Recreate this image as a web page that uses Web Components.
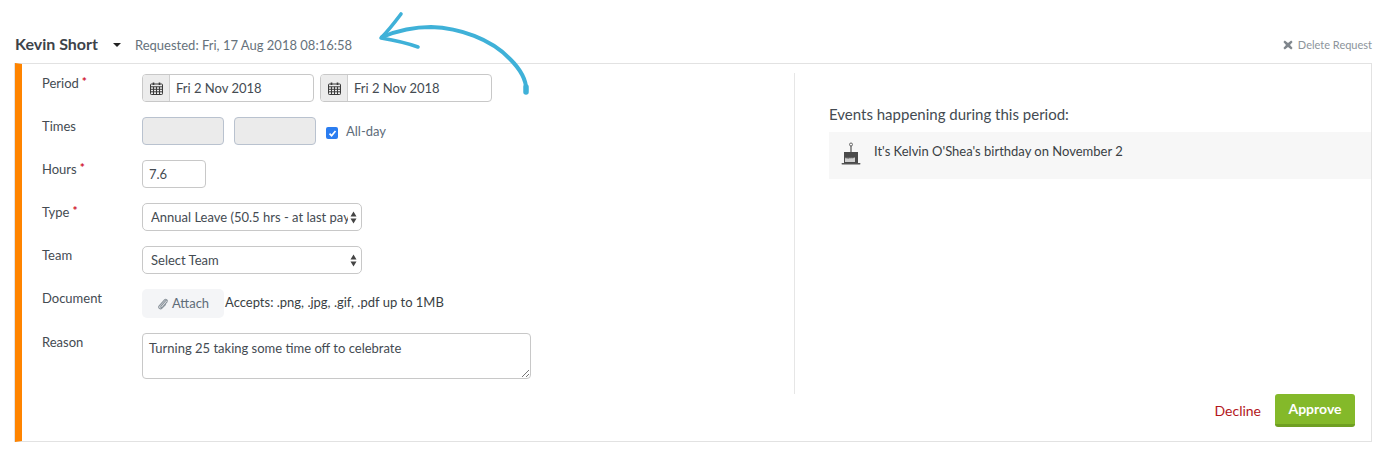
<!DOCTYPE html>
<html><head><meta charset="utf-8"><title>Request</title>
<style>
html,body{margin:0;padding:0;background:#fff}
body{font-family:Lato,"Open Sans",sans-serif;font-size:14px;color:#444b52;width:1383px;height:452px;overflow:hidden}
</style></head><body>
<x-request-page>
  <x-request-header slot="header" name="Kevin Short" requested="Requested: Fri, 17 Aug 2018 08:16:58"></x-request-header>
  <x-form-row slot="left" label="Period" required>
    <x-date-input value="Fri 2 Nov 2018" style="width:172px"></x-date-input>
    <x-date-input value="Fri 2 Nov 2018" style="width:172px"></x-date-input>
  </x-form-row>
  <x-form-row slot="left" label="Times">
    <x-text-box disabled style="width:82px"></x-text-box>
    <x-text-box disabled style="width:82px;margin-left:4px"></x-text-box>
    <x-check-label style="margin-left:4px">All-day</x-check-label>
  </x-form-row>
  <x-form-row slot="left" label="Hours" required><x-text-box value="7.6" style="width:64px"></x-text-box></x-form-row>
  <x-form-row slot="left" label="Type" required><x-select-box value="Annual Leave (50.5 hrs - at last pay"></x-select-box></x-form-row>
  <x-form-row slot="left" label="Team"><x-select-box value="Select Team"></x-select-box></x-form-row>
  <x-form-row slot="left" label="Document"><x-attach-field note="Accepts: .png, .jpg, .gif, .pdf up to 1MB"></x-attach-field></x-form-row>
  <x-form-row slot="left" label="Reason"><x-text-area value="Turning 25 taking some time off to celebrate"></x-text-area></x-form-row>
  <x-events-panel slot="right" heading="Events happening during this period:">
    <x-event-item>It's Kelvin O'Shea's birthday on November 2</x-event-item>
  </x-events-panel>
  <x-action-bar slot="actions"></x-action-bar>
</x-request-page>
<script>
function def(name, html){
  customElements.define(name, class extends HTMLElement{
    connectedCallback(){
      if(this.shadowRoot) return;
      const r=this.attachShadow({mode:'open'});
      r.innerHTML=typeof html==='function'?html(this):html;
    }
  });
}
const esc=s=>(s||'').replace(/&/g,'&amp;').replace(/</g,'&lt;');

def('x-request-page',`<style>
:host{display:block;position:relative;width:1383px;height:452px}
.head{height:63px;box-sizing:border-box;padding:0 11px 0 15px}
.card{box-sizing:border-box;margin-left:15px;width:1357px;height:379px;border:1px solid #e2e2e2;border-left:7px solid #ff8400;box-shadow:-1px 0 0 #e2e2e2;display:flex;flex-direction:column;position:relative}
.cols{display:flex;padding-top:9px;height:321px}
.left{width:773px;box-sizing:border-box;padding:1px 0 0 20px;border-right:1px solid #e6e6e6;display:flex;flex-direction:column;gap:15px}
.right{flex:1;padding:30px 0 0 34px;min-width:0}
.arrow{position:absolute;left:370px;top:6px;width:170px;height:100px;pointer-events:none}
</style>
<div class="head"><slot name="header"></slot></div>
<div class="card">
  <div class="cols"><div class="left"><slot name="left"></slot></div><div class="right"><slot name="right"></slot></div></div>
  <slot name="actions"></slot>
</div>
<svg class="arrow" viewBox="370 6 170 100" fill="none" stroke="#3fb1d8" stroke-linecap="round" stroke-linejoin="round">
  <path d="M526 92C527 82 521 70 510 59 491 39 460 28 431 27 414 27 399 30 382 37" stroke-width="4"/>
  <path d="M526 92V87" stroke-width="5.500"/>
  <path d="M401 14C395 22 388 31 381 38 393 40 407 43 418 47" stroke-width="3.600"/>
</svg>`);

def('x-request-header',h=>`<style>
:host{display:flex;align-items:center;height:63px;padding-top:25px;box-sizing:border-box}
.n{font:700 16px/20px Lato,sans-serif;color:#3d434a;width:97px}
.c{width:0;height:0;border:4px solid transparent;border-top:4px solid #222;border-bottom:0;margin:1px 0 0 1px}
.r{font:13px/20px Lato,sans-serif;color:#66727c;margin:1px 0 0 14px}
.d{margin-left:auto;font:11px/20px Lato,sans-serif;color:#8c949b;display:flex;align-items:center;gap:5px;margin-top:1px}
svg{width:10px;height:10px}
</style>
<span class="n">${esc(h.getAttribute('name'))}</span><span class="c"></span>
<span class="r">${esc(h.getAttribute('requested'))}</span>
<span class="d"><svg viewBox="0 0 10 10"><path d="M1.800.6 5 3 8.200.6 9.600 2 7 5 9.600 8 8.200 9.400 5 7 1.800 9.400.4 8 3 5 .4 2z" fill="#7f868c"/></svg>Delete Request</span>`);

def('x-form-row',h=>`<style>
:host{display:flex;align-items:flex-start;min-height:28px}
.l{width:100px;flex:none;font:13px/20px Lato,sans-serif;color:#444b52;display:flex;gap:3px;margin-top:-1px}
.s{color:#d0112b;font-size:12px;font-weight:700;line-height:17px}
.c{display:flex;align-items:flex-start;gap:6px}
</style>
<div class="l">${esc(h.getAttribute('label'))}${h.hasAttribute('required')?'<span class="s">*</span>':''}</div>
<div class="c"><slot></slot></div>`);

const calIcon=`<svg width="13" height="13" viewBox="0 0 13 13" fill="none" stroke="#3b3b3b" stroke-width="1"><rect x=".5" y="2" width="12" height="10.500" rx=".8"/><path d="M.5 4.800h12M.5 7.300h12M.5 9.800h12M3.500 4.800v7.700M6.500 4.800v7.700M9.500 4.800v7.700"/><path d="M3.500 .5v2.500M9.500 .5v2.500" stroke-width="1.600"/></svg>`;

def('x-date-input',h=>`<style>
:host{display:flex;height:28px;box-sizing:border-box;border:1px solid #c8c8c8;border-radius:4px;overflow:hidden;background:#fff}
.i{width:26px;flex:none;background:#ececec;border-right:1px solid #cfcfcf;display:flex;align-items:center;justify-content:center}
.v{padding-left:6px;font:13px/26px Lato,sans-serif;color:#444b52;white-space:nowrap}
</style><div class="i">${calIcon}</div><div class="v">${esc(h.getAttribute('value'))}</div>`);

def('x-text-box',h=>`<style>
:host{display:block;height:28px;box-sizing:border-box;border:1px solid ${h.hasAttribute('disabled')?'#b9c2cf':'#c8c8c8'};border-radius:4px;background:${h.hasAttribute('disabled')?'#ebebeb':'#fff'};padding-left:6px;font:13px/26px Lato,sans-serif;color:#444b52}
</style>${esc(h.getAttribute('value'))}`);

def('x-check-label',`<style>
:host{display:flex;align-items:center;gap:8px;height:28px;font:13px/20px Lato,sans-serif;color:#5d6c7a}
.b{width:12px;height:12px;background:#2b7df0;border-radius:2px;display:flex;align-items:center;justify-content:center;margin-top:4px}
.t{margin-top:0}
</style><span class="b"><svg width="9" height="9" viewBox="0 0 9 9" fill="none" stroke="#fff" stroke-width="1.700"><path d="M1.500 4.700 3.600 6.800 7.500 2"/></svg></span><span class="t"><slot></slot></span>`);

def('x-select-box',h=>`<style>
:host{display:flex;align-items:center;width:220px;height:28px;box-sizing:border-box;border:1px solid #c8c8c8;border-radius:5px;background:#fff;padding-left:8px;position:relative}
.v{width:197px;overflow:hidden;white-space:nowrap;font:13px/26px Lato,sans-serif;color:#444b52}
svg{position:absolute;right:4px;top:7px}
</style><div class="v">${esc(h.getAttribute('value'))}</div>
<svg width="7" height="13" viewBox="0 0 7 13" fill="#444"><path d="M3.500 .5 6.500 5.500H.5zM.5 7.500H6.500L3.500 12.500z"/></svg>`);

def('x-attach-field',h=>`<style>
:host{display:flex;align-items:flex-start;height:29px}
.b{width:82px;height:29px;box-sizing:border-box;background:#f4f5f7;border-radius:5px;display:flex;align-items:center;justify-content:center;gap:4px;font:13px/27px Lato,sans-serif;color:#5f6c78}
.n{font:13px/27px Lato,sans-serif;color:#3a3f44;margin-left:1px}
</style><span class="b"><svg width="11" height="12" viewBox="0 0 11 12" fill="none" stroke="#8b949c" stroke-width="1.100" stroke-linecap="round"><path d="M9 2.300 4 8.200C3.200 9.200 4.500 10.200 5.300 9.300L10 3.800C11 2.200 8.800.4 7.500 1.800L2.200 7.800C.7 9.700 3.200 12 5 10.200L8.500 6.500"/></svg>Attach</span><span class="n">${esc(h.getAttribute('note'))}</span>`);

def('x-text-area',h=>`<style>
:host{display:block;width:389px;height:46px;box-sizing:border-box;border:1px solid #c8c8c8;border-radius:4px;background:#fff;padding:4px 6px;font:13px/20px Lato,sans-serif;color:#444b52;position:relative}
svg{position:absolute;right:1px;bottom:1px}
</style>${esc(h.getAttribute('value'))}
<svg width="8" height="8" viewBox="0 0 8 8" stroke="#777" stroke-width="1"><path d="M1 8 8 1M5 8 8 5"/></svg>`);

def('x-events-panel',h=>`<style>
:host{display:block}
.h{font:15px/22px Lato,sans-serif;color:#444b52;margin-bottom:7px}
</style><div class="h">${esc(h.getAttribute('heading'))}</div><slot></slot>`);

def('x-event-item',`<style>
:host{display:flex;height:47px;background:#f7f7f7;box-sizing:border-box;padding:9px 0 0 12px;gap:13px;font:13px/20px Lato,sans-serif;color:#3a3f44}
svg{margin-top:1px;flex:none}
</style>
<svg width="20" height="24" viewBox="0 0 20 24"><circle cx="10" cy="2.500" r="1.500" fill="none" stroke="#666" stroke-width="1"/><rect x="9.400" y="4" width="1.200" height="6" fill="#555"/><rect x="3" y="10" width="14" height="11" fill="#4a4a4a"/><path d="M4 15c1 2 1.500 2 2 0 .7 2.500 1.500 2.500 2 0 .5 2 1.500 2 2 0 .7 2 1.500 2 2 0 .4 1.500 1 1.500 2 0V20H4z" fill="#cfcfcf"/><rect x=".5" y="21" width="19" height="1.500" rx=".7" fill="#555"/></svg>
<span><slot></slot></span>`);

def('x-action-bar',`<style>
:host{display:flex;justify-content:flex-end;align-items:flex-start;padding-right:16px;gap:14px}
.d{font:14px/33px Lato,sans-serif;color:#b3171c}
.a{width:80px;height:33px;box-sizing:border-box;background:#84b92a;border-bottom:3px solid #6f9f22;border-radius:3px;color:#fff;font:700 14px/29px Lato,sans-serif;text-align:center}
</style><span class="d">Decline</span><span class="a">Approve</span>`);
</script>
</body></html>
